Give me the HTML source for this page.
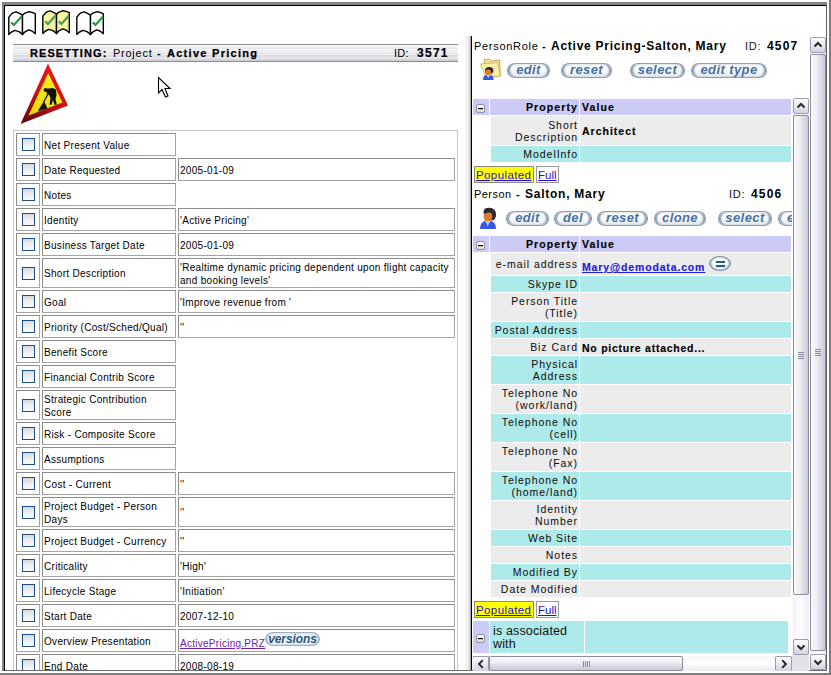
<!DOCTYPE html><html><head><meta charset="utf-8"><style>
html,body{margin:0;padding:0;width:831px;height:675px;overflow:hidden;background:#fff;}
body{position:relative;font-family:"Liberation Sans",sans-serif;font-size:11px;color:#000;}
.abs{position:absolute;display:block;}
.cell{position:absolute;box-sizing:border-box;border:1px solid #8c8c8c;border-right-color:#a4a4a4;border-bottom-color:#a4a4a4;}
.lbl{font-size:10px;letter-spacing:0.3px;line-height:13px;color:#000;}
.cb{position:absolute;left:5px;width:13px;height:13px;box-sizing:border-box;border:1px solid #1f5a8c;background:linear-gradient(#d8d8d8 0%,#ececec 45%,#fafafa 100%);border-color:#1d4f86;}
.pill{position:absolute;border:1px solid #8d9db2;border-radius:8px/7px;background:linear-gradient(#edf2f7 0%,#ffffff 35%,#f4f7fa 65%,#dde4ec 100%);box-shadow:inset 3px 0 2px -1px #8797ab,inset -3px 0 2px -1px #8797ab;text-align:center;font-weight:bold;font-style:italic;color:#4870a0;white-space:nowrap;overflow:hidden;}
.vt{font-size:11px;letter-spacing:0.6px;}
.vb{font-weight:bold;letter-spacing:1.2px;}
.tr{position:absolute;}
.hdr{background:#cbcbf6;}
.gr{background:#ececec;}
.cy{background:#afeaea;}
.plab{text-align:right;letter-spacing:0.95px;line-height:12px;font-size:10.5px;color:#0a0a0a;}
.pb{font-weight:bold;letter-spacing:0.9px;line-height:12px;font-size:10.5px;color:#000;position:absolute;white-space:nowrap;-webkit-text-stroke:0.15px currentColor;}
.sb{position:absolute;box-sizing:border-box;}
.sbtn{border:1px solid #9c9cac;border-radius:2px;background:linear-gradient(#fdfdff,#ebebf2 45%,#d2d2e4);display:flex;align-items:center;justify-content:center;}
.sthumb{border:1px solid #8c8c9c;border-radius:2px;background:linear-gradient(90deg,#fbfbfd,#eeeef4 40%,#c8c8d6);}
.hthumb{border:1px solid #8c8c9c;border-radius:2px;background:linear-gradient(#fbfbfd,#eeeef4 40%,#c8c8d6);}
</style></head><body>

<div class="abs" style="left:2px;top:2px;width:825px;height:3px;background:#858585"></div>
<div class="abs" style="left:2px;top:2px;width:2px;height:669px;background:#858585"></div>
<div class="abs" style="left:4px;top:5px;width:823px;height:1px;background:#000"></div>
<div class="abs" style="left:4px;top:5px;width:1px;height:666px;background:#000"></div>
<div class="abs" style="left:826px;top:5px;width:1px;height:666px;background:#5e5e72"></div>
<div class="abs" style="left:5px;top:670px;width:822px;height:1px;background:#6a6a6a"></div>
<div class="abs" style="left:829px;top:0px;width:2px;height:675px;background:#7d7d7d"></div>
<div class="abs" style="left:0px;top:673px;width:831px;height:2px;background:#7d7d7d"></div>
<svg class="abs" style="left:8px;top:11px" width="29" height="26" viewBox="0 0 29 26"><path d="M0.8 6.2 L0.8 23.6 L3.5 21 L7 19.4 L11 20.6 L14.5 23.5 L14.5 4.2 L11.5 2.4 L8 0.9 L5 1.8 L3 3.6 Z" fill="#fff" stroke="#000" stroke-width="1.4" stroke-linejoin="round"/><path d="M14.5 4.2 L16.5 2.3 L21 0.7 L25 1.6 L27.3 2.8 L27.3 22.7 L24 20 L20.6 18.8 L17 20.8 L14.5 23.5 Z" fill="#fff" stroke="#000" stroke-width="1.4" stroke-linejoin="round"/><path d="M3.3 11.4 L6 14 L13.6 5.6" fill="none" stroke="#2a9a3a" stroke-width="2.2"/></svg>
<svg class="abs" style="left:42px;top:10px" width="29" height="26" viewBox="0 0 29 26"><path d="M0.8 6.2 L0.8 23.6 L3.5 21 L7 19.4 L11 20.6 L14.5 23.5 L14.5 4.2 L11.5 2.4 L8 0.9 L5 1.8 L3 3.6 Z" fill="#f7f3a0" stroke="#000" stroke-width="1.4" stroke-linejoin="round"/><path d="M14.5 4.2 L16.5 2.3 L21 0.7 L25 1.6 L27.3 2.8 L27.3 22.7 L24 20 L20.6 18.8 L17 20.8 L14.5 23.5 Z" fill="#f7f3a0" stroke="#000" stroke-width="1.4" stroke-linejoin="round"/><path d="M3.3 11.4 L6 14 L13.6 5.6" fill="none" stroke="#4a9a5a" stroke-width="2.2"/><path d="M16.8 11.4 L19.5 14 L27 5.6" fill="none" stroke="#4a9a5a" stroke-width="2.2"/></svg>
<svg class="abs" style="left:76px;top:11px" width="29" height="26" viewBox="0 0 29 26"><path d="M0.8 6.2 L0.8 23.6 L3.5 21 L7 19.4 L11 20.6 L14.5 23.5 L14.5 4.2 L11.5 2.4 L8 0.9 L5 1.8 L3 3.6 Z" fill="#fff" stroke="#000" stroke-width="1.4" stroke-linejoin="round"/><path d="M14.5 4.2 L16.5 2.3 L21 0.7 L25 1.6 L27.3 2.8 L27.3 22.7 L24 20 L20.6 18.8 L17 20.8 L14.5 23.5 Z" fill="#fff" stroke="#000" stroke-width="1.4" stroke-linejoin="round"/><path d="M16.8 11.4 L19.5 14 L27 5.6" fill="none" stroke="#2a9a3a" stroke-width="2.2"/></svg>
<div class="abs" style="left:13px;top:44px;width:445px;height:18px;background:linear-gradient(#8c8c8c 0px,#8c8c8c 1px,#fcfcfd 1px,#fcfcfd 2px,#f3f3f6 2px,#f3f3f6 3px,#f0f0f4 3px,#f0f0f4 4px,#e6e6ea 4px,#e6e6ea 5px,#fafafa 5px,#fafafa 6px,#ececf0 6px,#ececf0 7px,#f4f4f6 7px,#f4f4f6 8px,#e8e8ea 8px,#e8e8ea 9px,#e6e6e8 9px,#e6e6e8 10px,#f2f2f4 10px,#f2f2f4 11px,#dcdcdc 11px,#dcdcdc 12px,#dedee0 12px,#dedee0 13px,#e8e8ec 13px,#e8e8ec 14px,#e4e4ea 14px,#e4e4ea 15px,#d4d4dc 15px,#d4d4dc 16px,#d0d0d8 16px,#d0d0d8 17px,#8a8a8a 17px,#8a8a8a 18px)"></div>
<div class="abs" style="left:30px;top:47px;line-height:13px;white-space:nowrap;color:#000;font-weight:bold;letter-spacing:1.08px;-webkit-text-stroke:0.25px #000">RESETTING:</div>
<div class="abs" style="left:113px;top:47px;line-height:13px;white-space:nowrap;color:#000;letter-spacing:0.75px">Project</div>
<div class="abs" style="left:157px;top:47px;line-height:13px;white-space:nowrap;color:#000;font-weight:bold">-</div>
<div class="abs" style="left:167px;top:47px;line-height:13px;white-space:nowrap;color:#000;font-weight:bold;letter-spacing:1.28px;-webkit-text-stroke:0.25px #000">Active Pricing</div>
<div class="abs" style="left:394px;top:47px;line-height:13px;white-space:nowrap;color:#000;letter-spacing:0.3px">ID:</div>
<div class="abs" style="left:417px;top:47px;line-height:13px;white-space:nowrap;color:#000;font-weight:bold;font-size:12px;letter-spacing:1.27px;-webkit-text-stroke:0.2px #000">3571</div>
<svg class="abs" style="left:18px;top:62px" width="52" height="64" viewBox="0 0 52 64">
<defs><linearGradient id="rg" x1="0.7" y1="0" x2="0.3" y2="1"><stop offset="0" stop-color="#f01818"/><stop offset="0.5" stop-color="#d01212"/><stop offset="1" stop-color="#6a0a0a"/></linearGradient>
<linearGradient id="yg" x1="0.8" y1="0" x2="0.2" y2="1"><stop offset="0" stop-color="#f8f030"/><stop offset="1" stop-color="#f0d800"/></linearGradient></defs>
<path d="M30 1.5 L50 43.5 L2.5 62 Z" fill="url(#rg)"/>
<path d="M30.2 11 L44.5 40.5 L10.5 53.5 Z" fill="url(#yg)"/>
<path d="M19.5 49.5 L26 39 L29.5 46.5 Z" fill="#111"/>
<path d="M25.5 40.5 L31 30" stroke="#111" stroke-width="1.3"/>
<circle cx="27.6" cy="28" r="1.9" fill="#111"/>
<path d="M29 26.8 L35 26 L38 27.5 L38.5 33 L37.5 37 L38.8 42.5 L36.5 43 L35 38 L33.5 42.8 L31.5 42.8 L32.5 36 L30.5 32 L29.5 34 L28.5 31 Z" fill="#111"/>
</svg>
<svg class="abs" style="left:157px;top:76px" width="16" height="24" viewBox="0 0 16 24">
<path d="M1.5 1.5 L1.5 17 L5 13.5 L8.5 21 L11 20 L8 12.5 L13 12.5 Z" fill="#fff" stroke="#000" stroke-width="1.1" stroke-linejoin="miter"/>
</svg>
<div class="abs" style="left:5px;top:6px;width:461px;height:664px;overflow:hidden;pointer-events:none">
<div class="abs" style="left:8px;top:124px;width:445px;height:570px;box-sizing:border-box;border:1px solid #c4c4c4;"></div>
<div class="cell" style="left:11px;top:127px;width:24px;height:23px"><div class="cb" style="top:4px;left:5px"></div></div>
<div class="cell lbl" style="left:37px;top:127px;width:134px;height:23px;padding:4.5px 0 0 1px;white-space:nowrap">Net Present Value</div>
<div class="cell" style="left:11px;top:152px;width:24px;height:23px"><div class="cb" style="top:4px;left:5px"></div></div>
<div class="cell lbl" style="left:37px;top:152px;width:134px;height:23px;padding:4.5px 0 0 1px;white-space:nowrap">Date Requested</div>
<div class="cell lbl" style="left:173px;top:152px;width:277px;height:23px;padding:4.5px 0 0 1px;white-space:nowrap">2005-01-09</div>
<div class="cell" style="left:11px;top:177px;width:24px;height:23px"><div class="cb" style="top:4px;left:5px"></div></div>
<div class="cell lbl" style="left:37px;top:177px;width:134px;height:23px;padding:4.5px 0 0 1px;white-space:nowrap">Notes</div>
<div class="cell" style="left:11px;top:202px;width:24px;height:23px"><div class="cb" style="top:4px;left:5px"></div></div>
<div class="cell lbl" style="left:37px;top:202px;width:134px;height:23px;padding:4.5px 0 0 1px;white-space:nowrap">Identity</div>
<div class="cell lbl" style="left:173px;top:202px;width:277px;height:23px;padding:4.5px 0 0 1px;white-space:nowrap">'Active Pricing'</div>
<div class="cell" style="left:11px;top:227px;width:24px;height:23px"><div class="cb" style="top:4px;left:5px"></div></div>
<div class="cell lbl" style="left:37px;top:227px;width:134px;height:23px;padding:4.5px 0 0 1px;white-space:nowrap">Business Target Date</div>
<div class="cell lbl" style="left:173px;top:227px;width:277px;height:23px;padding:4.5px 0 0 1px;white-space:nowrap">2005-01-09</div>
<div class="cell" style="left:11px;top:252px;width:24px;height:30px"><div class="cb" style="top:8px;left:5px"></div></div>
<div class="cell lbl" style="left:37px;top:252px;width:134px;height:30px;padding:7.5px 0 0 1px;white-space:nowrap">Short Description</div>
<div class="cell lbl" style="left:173px;top:252px;width:277px;height:30px;padding:1.5px 0 0 1px;white-space:nowrap">'Realtime dynamic pricing dependent upon flight capacity<br>and booking levels'</div>
<div class="cell" style="left:11px;top:284px;width:24px;height:23px"><div class="cb" style="top:4px;left:5px"></div></div>
<div class="cell lbl" style="left:37px;top:284px;width:134px;height:23px;padding:4.5px 0 0 1px;white-space:nowrap">Goal</div>
<div class="cell lbl" style="left:173px;top:284px;width:277px;height:23px;padding:4.5px 0 0 1px;white-space:nowrap">'Improve revenue from '</div>
<div class="cell" style="left:11px;top:309px;width:24px;height:23px"><div class="cb" style="top:4px;left:5px"></div></div>
<div class="cell lbl" style="left:37px;top:309px;width:134px;height:23px;padding:4.5px 0 0 1px;white-space:nowrap">Priority (Cost/Sched/Qual)</div>
<div class="cell lbl" style="left:173px;top:309px;width:277px;height:23px;padding:4.5px 0 0 1px;white-space:nowrap">''</div>
<div class="cell" style="left:11px;top:334px;width:24px;height:23px"><div class="cb" style="top:4px;left:5px"></div></div>
<div class="cell lbl" style="left:37px;top:334px;width:134px;height:23px;padding:4.5px 0 0 1px;white-space:nowrap">Benefit Score</div>
<div class="cell" style="left:11px;top:359px;width:24px;height:23px"><div class="cb" style="top:4px;left:5px"></div></div>
<div class="cell lbl" style="left:37px;top:359px;width:134px;height:23px;padding:4.5px 0 0 1px;white-space:nowrap">Financial Contrib Score</div>
<div class="cell" style="left:11px;top:384px;width:24px;height:30px"><div class="cb" style="top:8px;left:5px"></div></div>
<div class="cell lbl" style="left:37px;top:384px;width:134px;height:30px;padding:1.5px 0 0 1px;white-space:nowrap">Strategic Contribution<br>Score</div>
<div class="cell" style="left:11px;top:416px;width:24px;height:23px"><div class="cb" style="top:4px;left:5px"></div></div>
<div class="cell lbl" style="left:37px;top:416px;width:134px;height:23px;padding:4.5px 0 0 1px;white-space:nowrap">Risk - Composite Score</div>
<div class="cell" style="left:11px;top:441px;width:24px;height:23px"><div class="cb" style="top:4px;left:5px"></div></div>
<div class="cell lbl" style="left:37px;top:441px;width:134px;height:23px;padding:4.5px 0 0 1px;white-space:nowrap">Assumptions</div>
<div class="cell" style="left:11px;top:466px;width:24px;height:23px"><div class="cb" style="top:4px;left:5px"></div></div>
<div class="cell lbl" style="left:37px;top:466px;width:134px;height:23px;padding:4.5px 0 0 1px;white-space:nowrap">Cost - Current</div>
<div class="cell lbl" style="left:173px;top:466px;width:277px;height:23px;padding:4.5px 0 0 1px;white-space:nowrap">''</div>
<div class="cell" style="left:11px;top:491px;width:24px;height:30px"><div class="cb" style="top:8px;left:5px"></div></div>
<div class="cell lbl" style="left:37px;top:491px;width:134px;height:30px;padding:1.5px 0 0 1px;white-space:nowrap">Project Budget - Person<br>Days</div>
<div class="cell lbl" style="left:173px;top:491px;width:277px;height:30px;padding:7.5px 0 0 1px;white-space:nowrap">''</div>
<div class="cell" style="left:11px;top:523px;width:24px;height:23px"><div class="cb" style="top:4px;left:5px"></div></div>
<div class="cell lbl" style="left:37px;top:523px;width:134px;height:23px;padding:4.5px 0 0 1px;white-space:nowrap">Project Budget - Currency</div>
<div class="cell lbl" style="left:173px;top:523px;width:277px;height:23px;padding:4.5px 0 0 1px;white-space:nowrap">''</div>
<div class="cell" style="left:11px;top:548px;width:24px;height:23px"><div class="cb" style="top:4px;left:5px"></div></div>
<div class="cell lbl" style="left:37px;top:548px;width:134px;height:23px;padding:4.5px 0 0 1px;white-space:nowrap">Criticality</div>
<div class="cell lbl" style="left:173px;top:548px;width:277px;height:23px;padding:4.5px 0 0 1px;white-space:nowrap">'High'</div>
<div class="cell" style="left:11px;top:573px;width:24px;height:23px"><div class="cb" style="top:4px;left:5px"></div></div>
<div class="cell lbl" style="left:37px;top:573px;width:134px;height:23px;padding:4.5px 0 0 1px;white-space:nowrap">Lifecycle Stage</div>
<div class="cell lbl" style="left:173px;top:573px;width:277px;height:23px;padding:4.5px 0 0 1px;white-space:nowrap">'Initiation'</div>
<div class="cell" style="left:11px;top:598px;width:24px;height:23px"><div class="cb" style="top:4px;left:5px"></div></div>
<div class="cell lbl" style="left:37px;top:598px;width:134px;height:23px;padding:4.5px 0 0 1px;white-space:nowrap">Start Date</div>
<div class="cell lbl" style="left:173px;top:598px;width:277px;height:23px;padding:4.5px 0 0 1px;white-space:nowrap">2007-12-10</div>
<div class="cell" style="left:11px;top:623px;width:24px;height:23px"><div class="cb" style="top:4px;left:5px"></div></div>
<div class="cell lbl" style="left:37px;top:623px;width:134px;height:23px;padding:4.5px 0 0 1px;white-space:nowrap">Overview Presentation</div>
<div class="cell lbl" style="left:173px;top:623px;width:277px;height:23px;padding:7px 0 0 1px;white-space:nowrap"><span style="color:#7020a0;text-decoration:underline;letter-spacing:0.27px">ActivePricing.PRZ</span></div>
<div class="pill" style="left:260px;top:626px;width:53px;height:12px;border-color:#9ab0c4;background:linear-gradient(#e4eef6,#f6fafd 40%,#dce8f2);box-shadow:inset 2px 0 2px -1px #8aa4bc,inset -2px 0 2px -1px #8aa4bc;color:#2a5878"><span style="font-size:12px;letter-spacing:-0.1px;line-height:12px;position:relative;top:0px">versions</span></div>
<div class="cell" style="left:11px;top:648px;width:24px;height:23px"><div class="cb" style="top:4px;left:5px"></div></div>
<div class="cell lbl" style="left:37px;top:648px;width:134px;height:23px;padding:4.5px 0 0 1px;white-space:nowrap">End Date</div>
<div class="cell lbl" style="left:173px;top:648px;width:277px;height:23px;padding:4.5px 0 0 1px;white-space:nowrap">2008-08-19</div>
</div>
<div class="abs" style="left:466px;top:36px;width:1px;height:634px;background:#e2e2e2"></div>
<div class="abs" style="left:468px;top:36px;width:2px;height:634px;background:#e0e0e4"></div>
<div class="abs" style="left:470px;top:36px;width:1px;height:634px;background:#a4a4a4"></div>
<div class="abs" style="left:471px;top:36px;width:1px;height:634px;background:#000"></div>
<div class="abs" style="left:474px;top:40px;line-height:13px;white-space:nowrap;color:#000;font-size:11px;letter-spacing:0.7px;">PersonRole</div>
<div class="abs" style="left:542px;top:40px;line-height:13px;white-space:nowrap;color:#000;font-size:11px;letter-spacing:0.6px;font-weight:bold;">-</div>
<div class="abs" style="left:551px;top:40px;line-height:13px;white-space:nowrap;color:#000;font-size:12px;letter-spacing:0.75px;font-weight:bold;">Active Pricing-Salton, Mary</div>
<div class="abs" style="left:745px;top:40px;line-height:13px;white-space:nowrap;color:#1a1a1a;font-size:11px;letter-spacing:0.8px;">ID:</div>
<div class="abs" style="left:767px;top:40px;line-height:13px;white-space:nowrap;color:#000;font-size:12px;letter-spacing:1.2px;font-weight:bold;">4507</div>
<svg class="abs" style="left:476px;top:55px" width="28" height="28" viewBox="0 0 28 28">
<path d="M8 4.5 L13.5 4 L15 6 L23.5 5 L24.5 21 L11 22.5 Z" fill="#f4e49a" stroke="#bca650" stroke-width="0.9"/>
<path d="M4.5 9 L21.5 7.5 L24.5 21 L10.5 22.5 Z" fill="#faeea8" stroke="#c8b45a" stroke-width="0.9"/>
<ellipse cx="13.2" cy="15.5" rx="4.2" ry="3.6" fill="#2c2a34"/>
<ellipse cx="12.2" cy="17.3" rx="3" ry="2.9" fill="#e07830"/>
<path d="M7 25 Q7 20.5 10 20 L12.3 21.8 L14.8 20 Q17.5 20.5 17.5 25 Z" fill="#3858e0"/>
<path d="M11 20.6 L13.6 20.6 L12.3 23 Z" fill="#a8d8f8"/>
</svg>
<div class="pill" style="left:507px;top:63px;width:41px;height:13px;"><span style="font-size:13px;letter-spacing:0.4px;line-height:13px;position:relative;top:-1px">edit</span></div>
<div class="pill" style="left:561px;top:63px;width:49px;height:13px;"><span style="font-size:13px;letter-spacing:0.4px;line-height:13px;position:relative;top:-1px">reset</span></div>
<div class="pill" style="left:630px;top:63px;width:53px;height:13px;"><span style="font-size:13px;letter-spacing:0.4px;line-height:13px;position:relative;top:-1px">select</span></div>
<div class="pill" style="left:691px;top:63px;width:74px;height:13px;"><span style="font-size:13px;letter-spacing:0.4px;line-height:13px;position:relative;top:-1px">edit type</span></div>
<div class="sb" style="left:810px;top:37px;width:16px;height:633px;background:linear-gradient(90deg,#f3f3f6,#fdfdff 50%,#ededf2)"></div><div class="sb sbtn" style="left:810px;top:37px;width:16px;height:16px"><svg width="14" height="14" viewBox="0 0 14 14"><path d="M3.5 8.5 L7 5 L10.5 8.5" fill="none" stroke="#2a2a2a" stroke-width="2"/></svg></div><div class="sb sbtn" style="left:810px;top:654px;width:16px;height:16px"><svg width="14" height="14" viewBox="0 0 14 14"><path d="M3.5 5.5 L7 9 L10.5 5.5" fill="none" stroke="#2a2a2a" stroke-width="2"/></svg></div><div class="sb sthumb" style="left:810px;top:54px;width:16px;height:597px"></div><div class="sb" style="left:815px;top:349px;width:6px;height:1px;background:#8a8a96"></div><div class="sb" style="left:815px;top:351px;width:6px;height:1px;background:#8a8a96"></div><div class="sb" style="left:815px;top:353px;width:6px;height:1px;background:#8a8a96"></div><div class="sb" style="left:815px;top:355px;width:6px;height:1px;background:#8a8a96"></div>
<div class="abs" style="left:473px;top:98px;width:319px;height:557px;overflow:hidden">
<div class="tr hdr" style="left:0px;top:1px;width:16px;height:16px;"></div><div class="abs" style="left:3px;top:6px;width:9px;height:9px;box-sizing:border-box;border:1px solid #8a96a4;border-radius:2px;background:linear-gradient(#fdfdfd,#f8f6f0 55%,#dcd4c0)"><div class="abs" style="left:1px;top:3px;width:5px;height:1px;background:#000;box-shadow:0 0.5px 0 rgba(0,0,0,0.4)"></div></div><div class="tr hdr" style="left:17px;top:1px;width:89px;height:16px;"><div class="pb" style="right:1px;top:2px;letter-spacing:1.1px">Property</div></div><div class="tr hdr" style="left:107px;top:1px;width:211px;height:16px;"><div class="pb" style="left:2px;top:2px;letter-spacing:1.1px">Value</div></div>
<div class="tr gr" style="left:18px;top:18px;width:88px;height:29px;"><div class="plab" style="position:absolute;right:1px;top:3px;white-space:nowrap">Short<br>Description</div></div><div class="tr gr" style="left:107px;top:18px;width:211px;height:29px;"><div class="pb" style="left:2px;top:9px;letter-spacing:1.0px">Architect</div></div>
<div class="tr cy" style="left:18px;top:48px;width:88px;height:16px;"><div class="plab" style="position:absolute;right:1px;top:2px;white-space:nowrap">ModelInfo</div></div><div class="tr cy" style="left:107px;top:48px;width:211px;height:16px;"></div>
<div class="tr " style="left:1px;top:68px;width:60px;height:17px;box-sizing:border-box;border:1px solid #8a8a7a;background:#ffff00"><span style="position:absolute;left:1px;top:2px;line-height:13px;font-size:11.5px;letter-spacing:0.4px;color:#2a10d0;text-decoration:underline">Populated</span></div><div class="tr " style="left:63px;top:68px;width:23px;height:17px;box-sizing:border-box;border:1px solid #9a9a9a;background:#fff"><span style="position:absolute;left:1px;top:2px;line-height:13px;font-size:11.5px;letter-spacing:0px;color:#2a10d0;text-decoration:underline">Full</span></div>
<div class="abs" style="left:1px;top:90px;line-height:13px;white-space:nowrap;color:#000;letter-spacing:0.46px">Person</div>
<div class="abs" style="left:43px;top:90px;line-height:13px;white-space:nowrap;color:#000;font-weight:bold">-</div>
<div class="abs" style="left:52px;top:90px;line-height:13px;white-space:nowrap;color:#000;font-weight:bold;font-size:12px;letter-spacing:0.75px">Salton, Mary</div>
<div class="abs" style="left:256px;top:90px;line-height:13px;white-space:nowrap;color:#0a0a0a;letter-spacing:0.8px">ID:</div>
<div class="abs" style="left:278px;top:90px;line-height:13px;white-space:nowrap;color:#000;font-weight:bold;font-size:12px;letter-spacing:1.2px">4506</div>
<svg class="abs" style="left:3px;top:106px" width="24" height="26" viewBox="0 0 24 26">
<path d="M7.5 8 Q8 3.5 13.5 3.8 Q19.5 4 20 10 Q20.3 14.5 17 16.5 L14 16 Z" fill="#2a2830"/>
<ellipse cx="12" cy="12.6" rx="4.4" ry="5" fill="#e07a2c"/>
<path d="M7.5 9 Q8.5 5.5 13 6 Q16.5 7 16.5 9.5 L15 8.5 Q11 8 8 10 Z" fill="#2a2830"/>
<path d="M4 25 Q4 18.5 9 17 L12 19 L15 17 Q20 18.5 20 25 Z" fill="#3a58e8"/>
<path d="M10 18 L13.5 18 L11.8 22.5 Z" fill="#a8d8f8"/>
</svg>
<div class="pill" style="left:33px;top:113px;width:41px;height:13px;"><span style="font-size:13px;letter-spacing:0.4px;line-height:13px;position:relative;top:-1px">edit</span></div>
<div class="pill" style="left:81px;top:113px;width:36px;height:13px;"><span style="font-size:13px;letter-spacing:0.4px;line-height:13px;position:relative;top:-1px">del</span></div>
<div class="pill" style="left:124px;top:113px;width:49px;height:13px;"><span style="font-size:13px;letter-spacing:0.4px;line-height:13px;position:relative;top:-1px">reset</span></div>
<div class="pill" style="left:181px;top:113px;width:50px;height:13px;"><span style="font-size:13px;letter-spacing:0.4px;line-height:13px;position:relative;top:-1px">clone</span></div>
<div class="pill" style="left:245px;top:113px;width:52px;height:13px;"><span style="font-size:13px;letter-spacing:0.4px;line-height:13px;position:relative;top:-1px">select</span></div>
<div class="pill" style="left:305px;top:113px;width:73px;height:13px;"><span style="font-size:13px;letter-spacing:0.4px;line-height:13px;position:relative;top:-1px">edit type</span></div>
<div class="tr hdr" style="left:0px;top:138px;width:16px;height:16px;"></div><div class="abs" style="left:3px;top:143px;width:9px;height:9px;box-sizing:border-box;border:1px solid #8a96a4;border-radius:2px;background:linear-gradient(#fdfdfd,#f8f6f0 55%,#dcd4c0)"><div class="abs" style="left:1px;top:3px;width:5px;height:1px;background:#000;box-shadow:0 0.5px 0 rgba(0,0,0,0.4)"></div></div><div class="tr hdr" style="left:17px;top:138px;width:89px;height:16px;"><div class="pb" style="right:1px;top:2px;letter-spacing:1.1px">Property</div></div><div class="tr hdr" style="left:107px;top:138px;width:211px;height:16px;"><div class="pb" style="left:2px;top:2px;letter-spacing:1.1px">Value</div></div>
<div class="tr gr" style="left:18px;top:155px;width:88px;height:22px;"><div class="plab" style="position:absolute;right:1px;top:5px;white-space:nowrap">e-mail address</div></div><div class="tr gr" style="left:107px;top:155px;width:211px;height:22px;"><div class="pb" style="left:2px;top:8px;letter-spacing:0.85px;color:#2020dc;text-decoration:underline">Mary@demodata.com</div><div class="abs" style="left:129px;top:3px;width:22px;height:15px;box-sizing:border-box;border:1px solid #7a8aa0;border-radius:11px/7.5px;background:linear-gradient(#f4f8fc,#fff 40%,#dfe7ef);box-shadow:inset 2px 0 2px -1px #8a9ab0,inset -2px 0 2px -1px #8a9ab0"><div class="abs" style="left:6px;top:4px;width:9px;height:2px;background:#2a5a7a"></div><div class="abs" style="left:6px;top:8px;width:9px;height:2px;background:#2a5a7a"></div></div></div>
<div class="tr cy" style="left:18px;top:178px;width:88px;height:16px;"><div class="plab" style="position:absolute;right:1px;top:2px;white-space:nowrap">Skype ID</div></div><div class="tr cy" style="left:107px;top:178px;width:211px;height:16px;"></div>
<div class="tr gr" style="left:18px;top:195px;width:88px;height:28px;"><div class="plab" style="position:absolute;right:1px;top:2px;white-space:nowrap">Person Title<br>(Title)</div></div><div class="tr gr" style="left:107px;top:195px;width:211px;height:28px;"></div>
<div class="tr cy" style="left:18px;top:224px;width:88px;height:16px;"><div class="plab" style="position:absolute;right:1px;top:2px;white-space:nowrap">Postal Address</div></div><div class="tr cy" style="left:107px;top:224px;width:211px;height:16px;"></div>
<div class="tr gr" style="left:18px;top:241px;width:88px;height:16px;"><div class="plab" style="position:absolute;right:1px;top:2px;white-space:nowrap">Biz Card</div></div><div class="tr gr" style="left:107px;top:241px;width:211px;height:16px;"><div class="pb" style="left:2px;top:3px;letter-spacing:0.75px">No picture attached...</div></div>
<div class="tr cy" style="left:18px;top:258px;width:88px;height:28px;"><div class="plab" style="position:absolute;right:1px;top:2px;white-space:nowrap">Physical<br>Address</div></div><div class="tr cy" style="left:107px;top:258px;width:211px;height:28px;"></div>
<div class="tr gr" style="left:18px;top:287px;width:88px;height:28px;"><div class="plab" style="position:absolute;right:1px;top:2px;white-space:nowrap">Telephone No<br>(work/land)</div></div><div class="tr gr" style="left:107px;top:287px;width:211px;height:28px;"></div>
<div class="tr cy" style="left:18px;top:316px;width:88px;height:28px;"><div class="plab" style="position:absolute;right:1px;top:2px;white-space:nowrap">Telephone No<br>(cell)</div></div><div class="tr cy" style="left:107px;top:316px;width:211px;height:28px;"></div>
<div class="tr gr" style="left:18px;top:345px;width:88px;height:28px;"><div class="plab" style="position:absolute;right:1px;top:2px;white-space:nowrap">Telephone No<br>(Fax)</div></div><div class="tr gr" style="left:107px;top:345px;width:211px;height:28px;"></div>
<div class="tr cy" style="left:18px;top:374px;width:88px;height:28px;"><div class="plab" style="position:absolute;right:1px;top:2px;white-space:nowrap">Telephone No<br>(home/land)</div></div><div class="tr cy" style="left:107px;top:374px;width:211px;height:28px;"></div>
<div class="tr gr" style="left:18px;top:403px;width:88px;height:28px;"><div class="plab" style="position:absolute;right:1px;top:2px;white-space:nowrap">Identity<br>Number</div></div><div class="tr gr" style="left:107px;top:403px;width:211px;height:28px;"></div>
<div class="tr cy" style="left:18px;top:432px;width:88px;height:16px;"><div class="plab" style="position:absolute;right:1px;top:2px;white-space:nowrap">Web Site</div></div><div class="tr cy" style="left:107px;top:432px;width:211px;height:16px;"></div>
<div class="tr gr" style="left:18px;top:449px;width:88px;height:16px;"><div class="plab" style="position:absolute;right:1px;top:2px;white-space:nowrap">Notes</div></div><div class="tr gr" style="left:107px;top:449px;width:211px;height:16px;"></div>
<div class="tr cy" style="left:18px;top:466px;width:88px;height:16px;"><div class="plab" style="position:absolute;right:1px;top:2px;white-space:nowrap">Modified By</div></div><div class="tr cy" style="left:107px;top:466px;width:211px;height:16px;"></div>
<div class="tr gr" style="left:18px;top:483px;width:88px;height:16px;"><div class="plab" style="position:absolute;right:1px;top:2px;white-space:nowrap">Date Modified</div></div><div class="tr gr" style="left:107px;top:483px;width:211px;height:16px;"></div>
<div class="tr " style="left:1px;top:503px;width:60px;height:17px;box-sizing:border-box;border:1px solid #8a8a7a;background:#ffff00"><span style="position:absolute;left:1px;top:2px;line-height:13px;font-size:11.5px;letter-spacing:0.4px;color:#2a10d0;text-decoration:underline">Populated</span></div><div class="tr " style="left:63px;top:503px;width:23px;height:17px;box-sizing:border-box;border:1px solid #9a9a9a;background:#fff"><span style="position:absolute;left:1px;top:2px;line-height:13px;font-size:11.5px;letter-spacing:0px;color:#2a10d0;text-decoration:underline">Full</span></div>
<div class="tr hdr" style="left:0px;top:523px;width:16px;height:32px;"></div><div class="abs" style="left:3px;top:536px;width:9px;height:9px;box-sizing:border-box;border:1px solid #8a96a4;border-radius:2px;background:linear-gradient(#fdfdfd,#f8f6f0 55%,#dcd4c0)"><div class="abs" style="left:1px;top:3px;width:5px;height:1px;background:#000;box-shadow:0 0.5px 0 rgba(0,0,0,0.4)"></div></div>
<div class="tr cy" style="left:17px;top:523px;width:94px;height:32px;"><div style="position:absolute;left:3px;top:4px;font-size:12.5px;letter-spacing:0.15px;line-height:13px;color:#111">is associated<br>with</div></div>
<div class="tr cy" style="left:112px;top:523px;width:203px;height:32px;"></div>
</div>
<div class="sb" style="left:793px;top:98px;width:16px;height:557px;background:linear-gradient(90deg,#f3f3f6,#fdfdff 50%,#ededf2)"></div><div class="sb sbtn" style="left:793px;top:98px;width:16px;height:16px"><svg width="14" height="14" viewBox="0 0 14 14"><path d="M3.5 8.5 L7 5 L10.5 8.5" fill="none" stroke="#2a2a2a" stroke-width="2"/></svg></div><div class="sb sbtn" style="left:793px;top:639px;width:16px;height:16px"><svg width="14" height="14" viewBox="0 0 14 14"><path d="M3.5 5.5 L7 9 L10.5 5.5" fill="none" stroke="#2a2a2a" stroke-width="2"/></svg></div><div class="sb sthumb" style="left:793px;top:115px;width:16px;height:480px"></div><div class="sb" style="left:798px;top:352px;width:6px;height:1px;background:#8a8a96"></div><div class="sb" style="left:798px;top:354px;width:6px;height:1px;background:#8a8a96"></div><div class="sb" style="left:798px;top:356px;width:6px;height:1px;background:#8a8a96"></div><div class="sb" style="left:798px;top:358px;width:6px;height:1px;background:#8a8a96"></div>
<div class="sb" style="left:473px;top:656px;width:319px;height:15px;background:linear-gradient(#f6f6f8,#fdfdff 50%,#ececf2)"></div>
<div class="sb sbtn" style="left:473px;top:656px;width:16px;height:15px;border-left:none;border-bottom:none;border-radius:0"><svg width="14" height="14" viewBox="0 0 14 14"><path d="M8.8 3.2 L5 7 L8.8 10.8" fill="none" stroke="#222" stroke-width="1.8"/></svg></div>
<div class="sb sbtn" style="left:775px;top:656px;width:17px;height:15px;border-bottom:none"><svg width="14" height="14" viewBox="0 0 14 14"><path d="M5.2 3.2 L9 7 L5.2 10.8" fill="none" stroke="#222" stroke-width="1.8"/></svg></div>
<div class="sb hthumb" style="left:489px;top:656px;width:194px;height:15px"></div>
<div class="sb" style="left:583px;top:661px;width:1px;height:6px;background:#8a8a96"></div>
<div class="sb" style="left:585px;top:661px;width:1px;height:6px;background:#8a8a96"></div>
<div class="sb" style="left:587px;top:661px;width:1px;height:6px;background:#8a8a96"></div>
<div class="sb" style="left:589px;top:661px;width:1px;height:6px;background:#8a8a96"></div>
<div class="sb" style="left:792px;top:655px;width:17px;height:16px;background:#e2e2e6"></div>
</body></html>
